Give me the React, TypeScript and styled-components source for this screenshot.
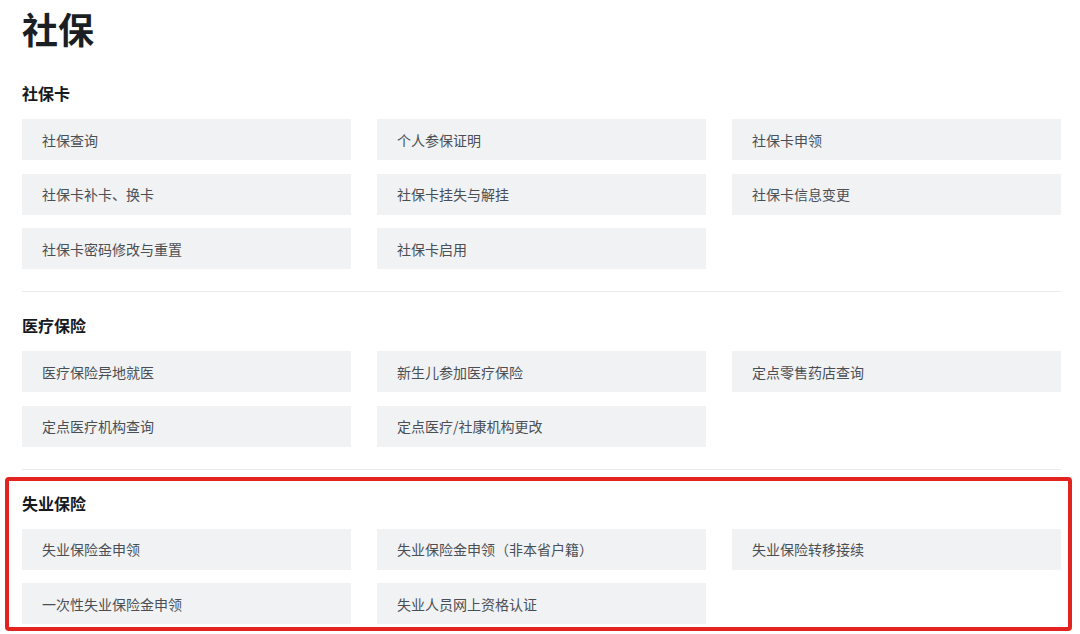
import React from "react";
import styled, { createGlobalStyle } from "styled-components";

const GlobalStyle = createGlobalStyle`
  html, body {
    margin: 0;
    padding: 0;
    background: #ffffff;
  }
  body {
    width: 1080px;
    height: 634px;
    overflow: hidden;
    font-family: "Noto Sans CJK SC", "Noto Sans", "Liberation Sans", sans-serif;
    -webkit-font-smoothing: antialiased;
  }
`;

const Page = styled.div`
  width: 1039px;
  padding: 4px 19px 0 22px;
`;

const Title = styled.h1`
  margin: 0 0 8px;
  font-size: 36px;
  line-height: 48px;
  font-weight: 700;
  color: #1b1f24;
`;

const Section = styled.section<{ $last?: boolean }>`
  position: relative;
  padding: ${(p) => (p.$last ? "21px 0 0" : "21px 0 22px")};
  border-bottom: ${(p) => (p.$last ? "none" : "1px solid #e8eaed")};
`;

const Heading = styled.h2`
  margin: 0 0 14px;
  font-size: 16px;
  line-height: 24px;
  font-weight: 700;
  color: #16191d;
`;

const Grid = styled.div`
  display: grid;
  grid-template-columns: repeat(3, 1fr);
  column-gap: 26px;
  row-gap: 13.5px;
`;

const Item = styled.div`
  height: 41px;
  display: flex;
  align-items: center;
  padding-left: 20px;
  background: #f1f2f4;
  font-size: 14px;
  color: #4a4f55;
  white-space: nowrap;
`;

const Highlight = styled.div`
  position: absolute;
  top: 7px;
  left: -17px;
  right: -11px;
  height: 154px;
  box-sizing: border-box;
  border: 4px solid #e2231f;
  border-radius: 4px;
  pointer-events: none;
`;

const sections: { title: string; items: string[]; highlight?: boolean }[] = [
  {
    title: "社保卡",
    items: [
      "社保查询",
      "个人参保证明",
      "社保卡申领",
      "社保卡补卡、换卡",
      "社保卡挂失与解挂",
      "社保卡信息变更",
      "社保卡密码修改与重置",
      "社保卡启用",
    ],
  },
  {
    title: "医疗保险",
    items: [
      "医疗保险异地就医",
      "新生儿参加医疗保险",
      "定点零售药店查询",
      "定点医疗机构查询",
      "定点医疗/社康机构更改",
    ],
  },
  {
    title: "失业保险",
    items: [
      "失业保险金申领",
      "失业保险金申领（非本省户籍）",
      "失业保险转移接续",
      "一次性失业保险金申领",
      "失业人员网上资格认证",
    ],
    highlight: true,
  },
];

export default function App() {
  return (
    <>
      <GlobalStyle />
      <Page>
        <Title>社保</Title>
        {sections.map((s, i) => (
          <Section key={s.title} $last={i === sections.length - 1}>
            <Heading>{s.title}</Heading>
            <Grid>
              {s.items.map((it) => (
                <Item key={it}>{it}</Item>
              ))}
            </Grid>
            {s.highlight && <Highlight />}
          </Section>
        ))}
      </Page>
    </>
  );
}
